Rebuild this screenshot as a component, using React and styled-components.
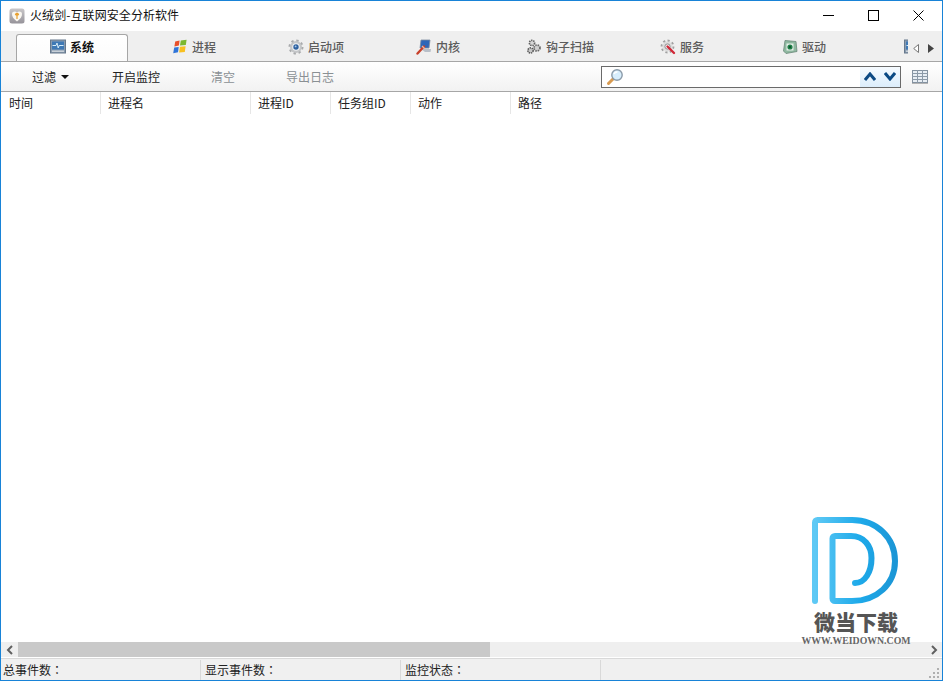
import React from "react";
import styled, { createGlobalStyle } from "styled-components";

const GlobalStyle = createGlobalStyle`
  html, body {
    margin: 0;
    padding: 0;
    background: #fff;
  }
  * {
    box-sizing: border-box;
  }
`;

const AppIcon = () => (
  <svg width="16" height="16" viewBox="0 0 16 16">
    <defs>
      <linearGradient id="appBg" x1="0" y1="0" x2="0" y2="1">
        <stop offset="0" stopColor="#c9c7c9" />
        <stop offset="1" stopColor="#96939a" />
      </linearGradient>
    </defs>
    <rect x="0.5" y="0.5" width="15" height="15" rx="2.5" fill="url(#appBg)" />
    <path d="M8 13.5 C4.5 11 2.8 8.5 3 5.8 C3.2 3.4 6.4 2.8 8 4.6 C9.6 2.8 12.8 3.4 13 5.8 C13.2 8.5 11.5 11 8 13.5Z" fill="#faf7f0" />
    <path d="M8 11 V7.5 M6.5 6.5 C7.2 5 8.8 5 9.5 6.5 C9 7.5 7 7.5 6.5 6.5Z" stroke="#e8a030" strokeWidth="1.2" fill="#efaa38" />
  </svg>
);

const SystemIcon = () => (
  <svg width="16" height="16" viewBox="0 0 16 16">
    <rect x="0.5" y="1" width="15" height="13" fill="#8a9cb0" stroke="#66788c" />
    <rect x="2" y="2.5" width="12" height="8" fill="#3f79b5" />
    <path d="M2.5 6.5 H6 L7 4 L8.2 9 L9.2 6.5 H13.5" stroke="#d8edf8" strokeWidth="1" fill="none" />
    <rect x="2" y="11.5" width="12" height="1.5" fill="#c8d0d8" />
  </svg>
);

const ProcessIcon = () => (
  <svg width="16" height="16" viewBox="0 0 16 16">
    <path d="M3.2 2.6 L7.6 1.6 L6.9 6.6 L2.4 7.4Z" fill="#e8502a" />
    <path d="M8.8 1.4 L14.6 0.8 L13.8 6 L8 6.5Z" fill="#7cb82f" />
    <path d="M2.2 8.6 L6.7 7.9 L6 13.2 L1.2 14.2Z" fill="#2f74d8" />
    <path d="M7.9 7.7 L13.6 7.2 L12.8 13 L7.1 13.6Z" fill="#f8c020" />
  </svg>
);

const StartupIcon = () => (
  <svg width="16" height="16" viewBox="0 0 16 16">
    <circle cx="8" cy="8" r="6" fill="#c4c6c8" />
    <circle cx="8" cy="8" r="6.6" fill="none" stroke="#a8aaac" strokeWidth="1.8" strokeDasharray="2.4 2.8" />
    <circle cx="8" cy="8" r="3.8" fill="#f0f2f4" />
    <circle cx="8" cy="8" r="2.7" fill="#2f62a0" />
    <circle cx="7.6" cy="7.4" r="0.9" fill="#a8c8e8" />
  </svg>
);

const KernelIcon = () => (
  <svg width="16" height="16" viewBox="0 0 16 16">
    <path d="M5 1 H14 L13 9 H4Z" fill="#2c66b8" stroke="#7c8ca0" strokeWidth="0.8" />
    <path d="M5 10 H15 L14.5 13 H9Z" fill="#b8bfc8" />
    <path d="M1.5 14.5 L8 7.5" stroke="#c8402a" strokeWidth="2.4" strokeLinecap="round" />
    <path d="M6 7 L9 10" stroke="#e8b8a0" strokeWidth="1.2" />
  </svg>
);

const HookIcon = () => (
  <svg width="16" height="16" viewBox="0 0 16 16">
    <circle cx="6" cy="4" r="2.6" fill="#d8d8d8" stroke="#606060" strokeWidth="1.6" strokeDasharray="1.4 0.8" />
    <circle cx="11" cy="9" r="3" fill="#d0d0d0" stroke="#686868" strokeWidth="1.7" strokeDasharray="1.5 0.9" />
    <circle cx="4.5" cy="11.5" r="2.6" fill="#c8c8c8" stroke="#585858" strokeWidth="1.6" strokeDasharray="1.4 0.8" />
  </svg>
);

const ServiceIcon = () => (
  <svg width="16" height="16" viewBox="0 0 16 16">
    <circle cx="7.5" cy="7.5" r="5" fill="#dcdcdc" />
    <circle cx="7.5" cy="7.5" r="6" fill="none" stroke="#a0a0a0" strokeWidth="1.8" strokeDasharray="2.2 2.4" />
    <circle cx="7.5" cy="7.5" r="2.6" fill="#f4f4f4" stroke="#909090" />
    <path d="M7.5 7.5 L14 14" stroke="#d02838" strokeWidth="2.4" strokeLinecap="round" />
  </svg>
);

const DriverIcon = () => (
  <svg width="16" height="16" viewBox="0 0 16 16">
    <path d="M3 1.5 L14 2.5 L15 12.5 L4 14.5 L1.5 12Z" fill="#8fb8a0" stroke="#6a8878" strokeWidth="0.8" />
    <rect x="4.5" y="4.5" width="7" height="7" fill="#e8f0ea" />
    <circle cx="8" cy="8" r="2.6" fill="#1f8048" />
    <circle cx="8" cy="8" r="1" fill="#0c4a28" />
  </svg>
);

const SearchIcon = () => (
  <svg width="18" height="18" viewBox="0 0 18 18">
    <path d="M7.5 10.5 L2.5 15.5" stroke="#d89a50" strokeWidth="3" strokeLinecap="round" />
    <circle cx="11" cy="7" r="5.2" fill="#d8eefc" stroke="#8a9aa8" strokeWidth="1.4" />
    <path d="M8 6 C8.6 4.6 10 3.8 11.5 4" stroke="#fff" strokeWidth="1.4" fill="none" />
  </svg>
);

// the eighth tab is cut off by the strip, only a sliver of its icon shows
const tabs = [
  { label: "系统", icon: <SystemIcon />, active: true },
  { label: "进程", icon: <ProcessIcon /> },
  { label: "启动项", icon: <StartupIcon /> },
  { label: "内核", icon: <KernelIcon /> },
  { label: "钩子扫描", icon: <HookIcon /> },
  { label: "服务", icon: <ServiceIcon /> },
  { label: "驱动", icon: <DriverIcon /> },
  { icon: <SystemIcon />, clipped: true },
];

const columns = [
  { label: "时间", width: 100 },
  { label: "进程名", width: 150 },
  { label: "进程ID", width: 80 },
  { label: "任务组ID", width: 80 },
  { label: "动作", width: 100 },
  { label: "路径", width: 120 },
];

const App = () => {
  return (
    <Root>
      <GlobalStyle />
      <TitleBar>
        <AppIcon />
        <TitleText>火绒剑-互联网安全分析软件</TitleText>
        <WindowButtons>
          <WindowButton>
            <svg width="11" height="11" viewBox="0 0 11 11">
              <path d="M0 5.5 H11" stroke="#000" />
            </svg>
          </WindowButton>
          <WindowButton>
            <svg width="11" height="11" viewBox="0 0 11 11">
              <rect x="0.5" y="0.5" width="10" height="10" fill="none" stroke="#000" />
            </svg>
          </WindowButton>
          <WindowButton>
            <svg width="11" height="11" viewBox="0 0 11 11">
              <path d="M0.5 0.5 L10.5 10.5 M10.5 0.5 L0.5 10.5" stroke="#000" />
            </svg>
          </WindowButton>
        </WindowButtons>
      </TitleBar>

      <TabBar>
        <TabStrip>
          {tabs.map((tab, i) => (
            <Tab key={i} $active={tab.active} $clipped={tab.clipped}>
              {tab.active && <ActiveTabBack />}
              <TabIcon>{tab.icon}</TabIcon>
              {tab.label && <TabLabel $active={tab.active}>{tab.label}</TabLabel>}
            </Tab>
          ))}
        </TabStrip>
        <TabArrows>
          <svg width="6" height="9" viewBox="0 0 6 9">
            <path d="M5.5 0.5 V8.5 L0.7 4.5Z" fill="#fff" stroke="#777" />
          </svg>
          <svg width="6" height="9" viewBox="0 0 6 9">
            <path d="M0 0 V9 L6 4.5Z" fill="#444" />
          </svg>
        </TabArrows>
      </TabBar>

      <Toolbar>
        <ToolButton $width={80} $offset={31}>
          过滤
          <DropArrow />
        </ToolButton>
        <ToolButton $width={99}>开启监控</ToolButton>
        <ToolButton $disabled $width={75}>清空</ToolButton>
        <ToolButton $disabled $width={48}>导出日志</ToolButton>
        <SearchBox>
          <SearchIcon />
          <SearchInput />
          <SearchNav>
            <svg width="12" height="9" viewBox="0 0 12 9">
              <path d="M1 8 L6 2 L11 8" fill="none" stroke="#0c4a84" strokeWidth="3" />
            </svg>
            <svg width="12" height="9" viewBox="0 0 12 9">
              <path d="M1 1 L6 7 L11 1" fill="none" stroke="#0c4a84" strokeWidth="3" />
            </svg>
          </SearchNav>
        </SearchBox>
        <GridButton>
          <svg width="16" height="14" viewBox="0 0 16 14">
            <rect x="0.5" y="0.5" width="15" height="12" fill="#e8eef4" stroke="#8492a0" />
            <path d="M0 3.5 H16 M0 6.5 H16 M0 9.5 H16 M5.5 0 V13 M10.5 0 V13" stroke="#8c9aa8" />
            <path d="M0 13.5 H16" stroke="#b4b4b4" />
          </svg>
        </GridButton>
      </Toolbar>

      <HeaderRow>
        {columns.map((col, i) => (
          <HeaderCell key={col.label} $width={col.width} $last={i === columns.length - 1}>
            {col.label}
          </HeaderCell>
        ))}
      </HeaderRow>

      <TableBody />

      <ScrollBar>
        <ScrollArrow>
          <svg width="8" height="10" viewBox="0 0 8 10">
            <path d="M6 1 L2 5 L6 9" fill="none" stroke="#606060" strokeWidth="2" />
          </svg>
        </ScrollArrow>
        <ScrollTrack>
          <ScrollThumb />
        </ScrollTrack>
        <ScrollArrow>
          <svg width="8" height="10" viewBox="0 0 8 10">
            <path d="M2 1 L6 5 L2 9" fill="none" stroke="#606060" strokeWidth="2" />
          </svg>
        </ScrollArrow>
      </ScrollBar>

      <StatusBar>
        <StatusCell $width={200}>总事件数<Colon>：</Colon></StatusCell>
        <StatusCell $width={200}>显示事件数<Colon>：</Colon></StatusCell>
        <StatusCell $width={200}>监控状态<Colon>：</Colon></StatusCell>
        <StatusFill>
          <Grip viewBox="0 0 11 11">
            <path d="M8 1h2v2H8zM4 5h2v2H4zM8 5h2v2H8zM0 9h2v2H0zM4 9h2v2H4zM8 9h2v2H8z" fill="#b0b0b0" />
          </Grip>
        </StatusFill>
      </StatusBar>

      <Watermark>
        <LogoMark width="95" height="92" viewBox="0 0 95 92">
          <defs>
            <linearGradient id="logoBlue" x1="0" y1="0" x2="1" y2="0">
              <stop offset="0" stopColor="#5ec9f5" />
              <stop offset="0.55" stopColor="#1eaaea" />
              <stop offset="1" stopColor="#1b96d6" />
            </linearGradient>
          </defs>
          <path
            d="M4 84 V5.5 C4 4 5 3 6.5 3 H41 C66 3 84 21 84 44 C84 67 66 84 41 84 H24 C22.5 84 21.5 83 21.5 81.5 V21.5 C21.5 20 22.5 19 24 19 H40 C53 19 60.5 29 60.5 41 C60.5 55 54 66 44 66"
            fill="none"
            stroke="url(#logoBlue)"
            strokeWidth="6"
            strokeLinecap="round"
            strokeLinejoin="round"
            transform="translate(0 2)"
          />
        </LogoMark>
        <WatermarkTitle>微当下载</WatermarkTitle>
        <WatermarkUrl>WWW.WEIDOWN.COM</WatermarkUrl>
      </Watermark>
    </Root>
  );
};

const Root = styled.main`
  position: relative;
  display: flex;
  flex-direction: column;
  width: 943px;
  height: 681px;
  overflow: hidden;
  background: #fff;
  border: 1px solid #1883d7;
  font-family: "Noto Sans CJK SC", "Liberation Sans", sans-serif;
  font-size: 12px;
  color: #222;
`;

const TitleBar = styled.div`
  display: flex;
  align-items: center;
  flex: 0 0 30px;
  padding-left: 8px;
  background: #fff;
`;

const TitleText = styled.span`
  margin-left: 5px;
  margin-bottom: 2px;
  color: #111;
  line-height: 28px;
  letter-spacing: 0.08px;
`;

const WindowButtons = styled.div`
  display: flex;
  margin-left: auto;
  margin-right: 1px;
  align-self: flex-start;
`;

const WindowButton = styled.div`
  display: flex;
  align-items: center;
  justify-content: center;
  width: 45px;
  height: 28px;
`;

const TabBar = styled.div`
  display: flex;
  flex: 0 0 31px;
  background: #efefef;
  border-bottom: 1px solid #a6a6a6;
`;

const TabStrip = styled.div`
  display: flex;
  width: 907px;
  padding-left: 10px;
  overflow: hidden;
`;

const Tab = styled.div`
  position: relative;
  display: flex;
  flex: 0 0 122px;
  align-items: center;
  justify-content: ${(p) => (p.$clipped ? "flex-start" : "center")};
  gap: 4px;
  height: 30px;
  padding-top: 1px;
  padding-left: ${(p) => (p.$clipped ? "39px" : "0")};
`;

const ActiveTabBack = styled.div`
  position: absolute;
  left: 5px;
  right: 5px;
  top: 3px;
  bottom: -1px;
  background: linear-gradient(#fff, #fbfbfb);
  border: 1px solid #a6a6a6;
  border-bottom: none;
  border-radius: 3px 3px 0 0;
`;

const TabIcon = styled.span`
  position: relative;
  display: flex;
  width: 16px;
  height: 16px;
`;

const TabLabel = styled.span`
  position: relative;
  color: ${(p) => (p.$active ? "#111" : "#5c5c5c")};
  font-weight: ${(p) => (p.$active ? 700 : 500)};
`;

const TabArrows = styled.div`
  display: flex;
  align-items: center;
  gap: 9px;
  padding: 5px 0 0 5px;
`;

const Toolbar = styled.div`
  display: flex;
  align-items: center;
  flex: 0 0 30px;
  background: linear-gradient(#fff, #f2f2f2);
  border-bottom: 1px solid #a6a6a6;
`;

const ToolButton = styled.div`
  display: flex;
  align-items: center;
  flex: 0 0 auto;
  width: ${(p) => p.$width}px;
  margin-left: ${(p) => p.$offset || 0}px;
  color: ${(p) => (p.$disabled ? "#8a9094" : "#222")};
  white-space: nowrap;
`;

const DropArrow = styled.span`
  width: 0;
  height: 0;
  margin-left: 5px;
  border-left: 4px solid transparent;
  border-right: 4px solid transparent;
  border-top: 4px solid #111;
`;

const SearchBox = styled.div`
  display: flex;
  align-items: center;
  flex: 0 0 300px;
  height: 22px;
  margin-left: 267px;
  padding-left: 4px;
  background: #fff;
  border: 1px solid #6a6a6a;
`;

const SearchInput = styled.div`
  flex: 1;
`;

const SearchNav = styled.div`
  display: flex;
  align-items: center;
  justify-content: center;
  gap: 8px;
  width: 40px;
  height: 20px;
  background: linear-gradient(#f6fbff, #dcedfb);
`;

const GridButton = styled.div`
  display: flex;
  margin-left: 11px;
`;

const HeaderRow = styled.div`
  display: flex;
  flex: 0 0 22px;
  background: #fff;
`;

const HeaderCell = styled.div`
  flex: 0 0 ${(p) => p.$width}px;
  padding-left: 7px;
  line-height: 22px;
  color: #222;
  border-right: ${(p) => (p.$last ? "none" : "1px solid #e6e6e6")};
  &:first-child {
    padding-left: 8px;
  }
`;

const TableBody = styled.div`
  flex: 1;
  background: #fff;
`;

const ScrollBar = styled.div`
  display: flex;
  flex: 0 0 15px;
  background: #efefef;
`;

const ScrollArrow = styled.div`
  display: flex;
  align-items: center;
  justify-content: center;
  flex: 0 0 17px;
`;

const ScrollTrack = styled.div`
  flex: 1;
`;

const ScrollThumb = styled.div`
  width: 472px;
  height: 100%;
  background: #c9c9c9;
`;

const StatusBar = styled.div`
  display: flex;
  flex: 0 0 22px;
  margin-top: 1px;
  background: #f0f0f0;
  border-top: 1px solid #d9d9d9;
`;

const StatusCell = styled.div`
  flex: 0 0 ${(p) => p.$width}px;
  padding-left: 2px;
  margin-top: 1px;
  line-height: 20px;
  color: #222;
  border-right: 1px solid #d9d9d9;
  &:not(:first-child) {
    padding-left: 4px;
  }
`;

// the TC face centres the full-width colon, as the reference does
const Colon = styled.span`
  font-family: "Noto Sans CJK TC", sans-serif;
`;

const StatusFill = styled.div`
  position: relative;
  flex: 1;
`;

const Grip = styled.svg`
  position: absolute;
  right: 2px;
  bottom: 2px;
  width: 11px;
  height: 11px;
`;

const Watermark = styled.div`
  position: absolute;
  left: 799px;
  top: 514px;
  display: flex;
  flex-direction: column;
  align-items: center;
  width: 112px;
`;

const LogoMark = styled.svg`
  display: block;
  margin-left: 4px;
`;

const WatermarkTitle = styled.div`
  margin-top: 2px;
  font-size: 21px;
  font-weight: 900;
  line-height: 24px;
  color: #555;
`;

const WatermarkUrl = styled.div`
  margin-top: 2px;
  font-family: "Liberation Serif", serif;
  font-size: 9.8px;
  font-weight: 700;
  line-height: 12px;
  color: #666;
  white-space: nowrap;
`;

export default App;
